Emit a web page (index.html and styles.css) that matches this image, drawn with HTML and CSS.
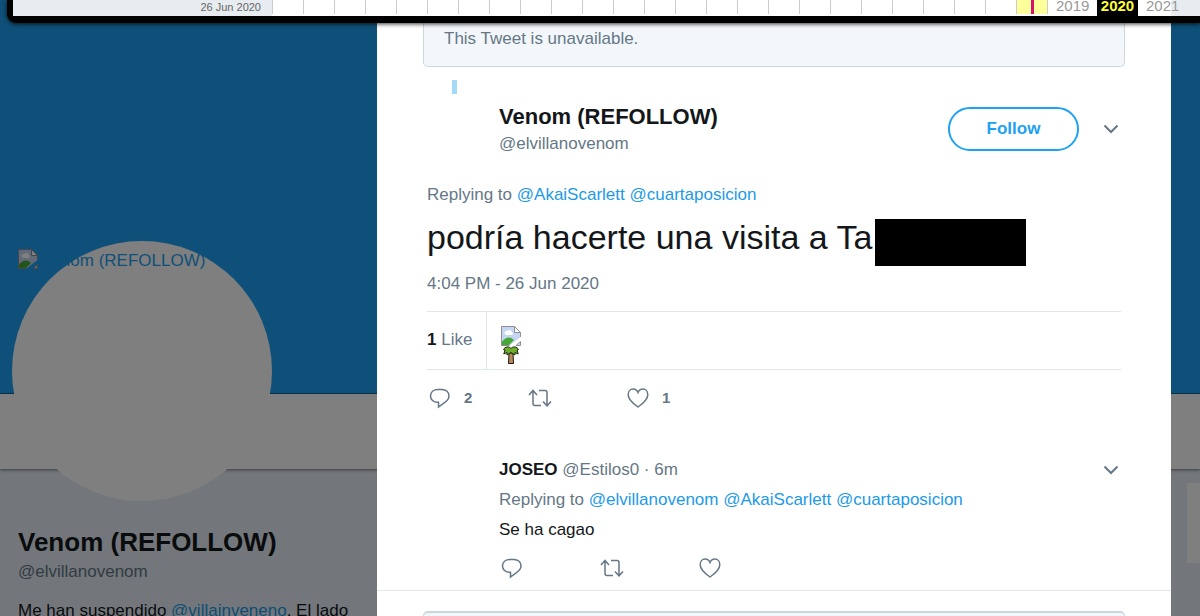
FILE: index.html
```html
<!DOCTYPE html>
<html lang="es">
<head>
<meta charset="utf-8">
<title>Venom (REFOLLOW)</title>
<link rel="stylesheet" href="styles.css">
</head>
<body>
<svg class="defs" aria-hidden="true">
  <symbol id="reply" viewBox="0 0 22 22"><path d="M9 2.500h4c4 0 7 2.600 7 6.400 0 3.700-2.700 5.600-5.500 7.400L9.500 20v-4.700H8.500C4.500 15.300 1.500 12.500 1.500 8.900 1.500 5 4.500 2.500 9 2.500z"/></symbol>
  <symbol id="retweet" viewBox="0 0 24 22"><path d="M1 8 5 3.500 9 8M5 4v12.500c0 1.200.6 2 2 2h6M11 3.500h6c1.400 0 2 .8 2 2v13M15 14.500l4 4.300 4-4.300"/></symbol>
  <symbol id="heart" viewBox="0 0 22 22"><path d="M11 20C6 16.500 1.200 12.700 1.200 7.700 1.200 4.500 3.200 2 6 2c2.200 0 4.200 1.400 5 3.400C11.800 3.400 13.800 2 16 2c2.800 0 4.800 2.500 4.800 5.700 0 5-4.800 8.800-9.800 12.300z"/></symbol>
  <symbol id="chevron" viewBox="0 0 16 10"><path d="M1.500 1.500 8 8l6.500-6.500"/></symbol>
  <symbol id="broken" viewBox="0 0 20 20">
    <path fill="#c5d5f4" stroke="#8f8f8f" d="M19.500 11V6.500l-6-6H.5v19h8"/>
    <path fill="#fff" stroke="#8f8f8f" d="M13.500.5v6h6z"/>
    <path fill="#fff" d="M4 8a2 2 0 0 1 2-3 3 3 0 0 1 5 1 2 2 0 0 1 0 3H5z"/>
    <path fill="#46a935" d="M1 19v-3c3-5 8-6 12-2l-5 5z"/>
    <path fill="#c5d5f4" stroke="#8f8f8f" d="M15 19.500l4.500-4v4z"/>
  </symbol>
  <symbol id="palm" viewBox="0 0 16 18">
    <path fill="#b98a5c" stroke="#1c1a10" d="M6 7h4l.5 10.500h-5z"/>
    <path fill="#6fae2c" stroke="#16260a" d="M8 2.500C6 0 2 .5.500 3.500L2 4 .8 8 4 6.500V9l4-2.500L12 9V6.500L15.200 8 14 4l1.500-.5C14 .5 10 0 8 2.500z"/>
  </symbol>
</svg>

<div class="page">
  <div class="banner"></div>
  <div class="profile-nav"></div>
  <div class="profile-body">
    <aside class="sidebar">
      <a class="avatar" href="#"><svg class="broken"><use href="#broken"/></svg>Venom (REFOLLOW)</a>
      <h1 class="profile-name">Venom (REFOLLOW)</h1>
      <p class="profile-handle">@elvillanovenom</p>
      <p class="bio">Me han suspendido <a href="#">@villainveneno</a>. El lado</p>
    </aside>
    <div class="side-card"></div>
  </div>
</div>

<div class="backdrop">
  <main class="modal">
    <div class="unavailable">This Tweet is unavailable.</div>
    <div class="thread-line"></div>

    <article class="tweet">
      <header class="tweet-head">
        <div class="author">
          <h2 class="author-name">Venom (REFOLLOW)</h2>
          <p class="muted">@elvillanovenom</p>
        </div>
        <button class="follow" type="button">Follow</button>
        <button class="icon-btn" type="button" aria-label="More"><svg class="chevron"><use href="#chevron"/></svg></button>
      </header>
      <p class="replying">Replying to <a href="#">@AkaiScarlett</a> <a href="#">@cuartaposicion</a></p>
      <p class="tweet-text">podría hacerte una visita a Ta<span class="redacted"></span></p>
      <p class="date">4:04 PM - 26 Jun 2020</p>
      <div class="stats">
        <div class="likes"><b>1</b> Like</div>
        <div class="faces"><svg class="broken"><use href="#broken"/></svg><svg class="palm"><use href="#palm"/></svg></div>
      </div>
      <div class="actions">
        <button class="action" type="button" aria-label="Reply"><svg class="icon"><use href="#reply"/></svg>2</button>
        <button class="action" type="button" aria-label="Retweet"><svg class="icon wide"><use href="#retweet"/></svg></button>
        <button class="action" type="button" aria-label="Like"><svg class="icon"><use href="#heart"/></svg>1</button>
      </div>
    </article>

    <article class="reply">
      <header class="reply-head">
        <p><b>JOSEO</b> @Estilos0 · 6m</p>
        <button class="icon-btn" type="button" aria-label="More"><svg class="chevron"><use href="#chevron"/></svg></button>
      </header>
      <p>Replying to <a href="#">@elvillanovenom</a> <a href="#">@AkaiScarlett</a> <a href="#">@cuartaposicion</a></p>
      <p class="reply-text">Se ha cagao</p>
      <div class="actions">
        <button class="action" type="button" aria-label="Reply"><svg class="icon"><use href="#reply"/></svg></button>
        <button class="action" type="button" aria-label="Retweet"><svg class="icon wide"><use href="#retweet"/></svg></button>
        <button class="action" type="button" aria-label="Like"><svg class="icon"><use href="#heart"/></svg></button>
      </div>
    </article>
    <div class="next"><div class="unavailable next-box"></div></div>
  </main>
</div>

<div class="timeline">
  <div class="timeline-date">26 Jun 2020</div>
  <div class="months">
    <i></i><i></i><i></i><i></i><i></i><i></i><i></i><i></i><i></i><i></i><i></i><i></i>
    <i></i><i></i><i></i><i></i><i></i><i></i><i></i><i></i><i></i><i></i><i></i><i></i>
    <i class="current"></i>
  </div>
  <div class="years"><span>2019</span><b>2020</b><span>2021</span></div>
</div>
</body>
</html>
```
FILE: styles.css
```css
* { box-sizing: border-box; }

body {
  margin: 0;
  height: 100vh;
  overflow: hidden;
  position: relative;
  font: 17px/24px "Liberation Sans", Arial, sans-serif;
  color: #14171a;
}

h1, h2, p { margin: 0; }
a { color: #1d9ae6; text-decoration: none; }
button {
  font: inherit;
  background: none;
  border: 0;
  padding: 0;
  cursor: pointer;
}
svg { display: block; flex: none; }
.defs { position: absolute; width: 0; height: 0; }

/* Profile behind the dialog */
.page { height: 100%; overflow: hidden; background: #e6eef6; }
.banner { height: 394px; background: #1da1f2; border-bottom: 1px solid #0c6cae; }
.profile-nav { height: 75px; background: #fff; box-shadow: 0 1px 3px rgba(0, 0, 0, .5); }
.profile-body { display: flex; justify-content: space-between; align-items: flex-start; }
.sidebar { width: 377px; padding-left: 18px; }
.avatar {
  display: flex;
  align-items: flex-start;
  gap: 3px;
  width: 260px;
  height: 260px;
  margin: -228px 0 0 -6px;
  padding: 8px 0 0 6px;
  border-radius: 50%;
  background: #fff;
  color: #1da1f2;
  white-space: nowrap;
}
.broken { width: 20px; height: 20px; }
.profile-name { margin-top: 25px; font-size: 26px; line-height: 32px; }
.profile-handle { margin-top: 2px; color: #657786; }
.bio { margin-top: 15px; }
.side-card { width: 13px; height: 80px; margin-top: 14px; background: #fff; }

/* Dialog */
.backdrop {
  position: absolute;
  inset: 0;
  padding: 0 29px 0 377px;
  overflow: hidden;
  background: rgba(0, 0, 0, .5);
}
.modal { min-height: 100%; background: #fff; color: #657786; }
.unavailable {
  margin: 0 46px;
  padding: 27px 20px 15px;
  border: 1px solid #ccd6dd;
  border-top: 0;
  border-radius: 0 0 5px 5px;
  background: #f3f7fb;
}
.thread-line { width: 5px; height: 14px; margin: 13px 0 8px 75px; background: #a5d9f8; }
.tweet { padding: 0 50px; }
.tweet-head { display: flex; align-items: center; padding-left: 72px; }
.author { flex: 1; }
.author-name { font-size: 22px; line-height: 30px; color: #14171a; }
.follow {
  width: 131px;
  height: 44px;
  margin-right: 22px;
  border: 2px solid #1da1f2;
  border-radius: 22px;
  color: #1da1f2;
  font-weight: bold;
}
.icon-btn { padding: 7px 2px; }
.chevron { width: 16px; height: 10px; fill: none; stroke: #657786; stroke-width: 2; }
.replying { margin-top: 27px; }
.tweet-text {
  display: flex;
  height: 54px;
  margin-top: 5px;
  gap: 3px;
  color: #14171a;
  font-size: 34px;
  line-height: 50px;
}
.redacted { width: 151px; height: 47px; align-self: flex-end; background: #000; }
.date { margin-top: 6px; }
.stats {
  display: flex;
  height: 59px;
  margin-top: 15px;
  border: solid #e1e8ed;
  border-width: 1px 0;
}
.likes { width: 60px; border-right: 1px solid #e1e8ed; line-height: 56px; }
b { color: #14171a; }
.faces { padding: 14px; }
.palm { width: 16px; height: 18px; margin: 0 2px; }
.actions { display: flex; padding-left: 2px; }
.tweet .actions { margin-top: 16px; }
.action {
  display: flex;
  align-items: center;
  gap: 13px;
  width: 99px;
  height: 24px;
  color: #657786;
  font-size: 15px;
  font-weight: bold;
}
.icon { width: 22px; height: 22px; fill: none; stroke: #657786; stroke-width: 1.5; }
.wide { width: 24px; }
.reply { padding: 45px 50px 10px 122px; line-height: 30px; }
.reply-head { display: flex; justify-content: space-between; align-items: center; }
.reply-text { color: #14171a; }
.reply .actions { margin-top: 11px; }
.next { padding-top: 20px; border-top: 1px solid #e1e8ed; }
.next-box { border-top: 2px solid #ccd6dd; border-radius: 5px; }

/* Archive timeline toolbar */
.timeline {
  position: absolute;
  top: 0;
  left: 7px;
  right: 0;
  display: flex;
  height: 23px;
  border: solid #000;
  border-width: 0 0 7px 6px;
  border-radius: 0 0 0 9px;
  background: #fff;
  box-shadow: 0 1px 4px rgba(0, 0, 0, .8);
  color: #666;
}
.timeline-date {
  width: 259px;
  padding-right: 11px;
  background: #e6ecf0;
  font-size: 11px;
  line-height: 14px;
  text-align: right;
}
.months { flex: 1; display: flex; height: 14px; border-right: 1px solid #ccc; }
.months i { flex: 1; border-left: 1px solid #ccc; }
.months .current { background: linear-gradient(#d6126b, #d6126b) center / 3px 100% no-repeat #ffff9c; }
.years {
  display: grid;
  grid-template-columns: 49px 41px 62px;
  color: #999;
  background: linear-gradient(to right, #fff 123px, #e6ecf0 123px);
  font-size: 15px;
  line-height: 11px;
}
.years span { padding-left: 8px; }
.years b { background: #000; color: #ff3; text-align: center; }
```
